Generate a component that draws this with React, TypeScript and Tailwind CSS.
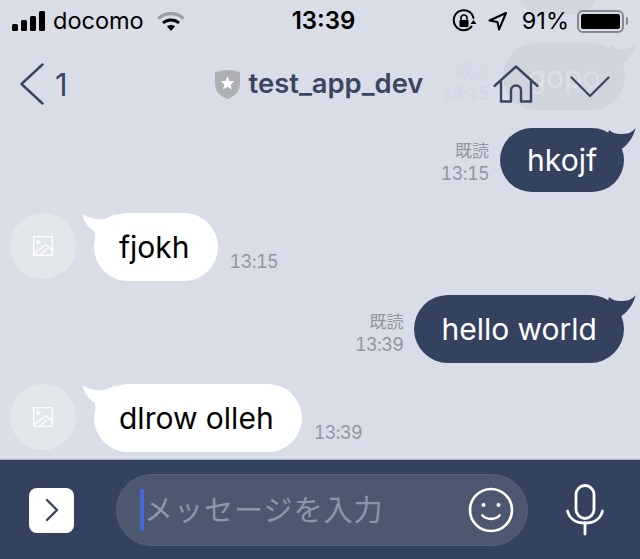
const font = { sans: "font-['Inter','Noto_Sans_CJK_JP',sans-serif]" }

function SignalBars() {
  return (
    <svg viewBox="0 0 34 20" className="h-5 w-[34px]" fill="#000">
      <rect x="0" y="13" width="6" height="7" rx="1.5" />
      <rect x="9" y="9" width="6" height="11" rx="1.5" />
      <rect x="18" y="5" width="6" height="15" rx="1.5" />
      <rect x="27" y="0" width="6" height="20" rx="1.5" />
    </svg>
  )
}

function Wifi() {
  return (
    <svg viewBox="0 0 28 20" className="h-5 w-7" fill="none" strokeLinecap="butt">
      <path d="M1.5 7.5C8.5 1 19.5 1 26.5 7.5" stroke="#9a9da3" strokeWidth="3.2" />
      <path d="M6 12c4.5-4 11.5-4 16 0" stroke="#000" strokeWidth="3" />
      <path d="M10 15.5c2.4-2 5.6-2 8 0L14 20z" fill="#000" />
    </svg>
  )
}

function RotationLock() {
  return (
    <svg viewBox="0 0 24 24" className="h-6 w-6" fill="none">
      <path d="M19.5 17.5A10 10 0 1 1 21.5 9" stroke="#000" strokeWidth="2" strokeLinecap="round" />
      <path d="M18.5 11h6l-3 4z" fill="#000" transform="rotate(180 21.5 13)" />
      <path d="M9 11V9a3 3 0 0 1 6 0v2" stroke="#000" strokeWidth="1.6" />
      <rect x="7.5" y="11" width="9" height="7" rx="1.2" fill="#000" />
    </svg>
  )
}

function LocationArrow() {
  return (
    <svg viewBox="0 0 20 20" className="h-5 w-5" fill="none" stroke="#000" strokeWidth="2" strokeLinejoin="round">
      <path d="M18 2 1.5 9.5l8 1.5 1.5 7.500z" />
    </svg>
  )
}

function Battery() {
  return (
    <div className="flex items-center">
      <div className="flex h-[23px] w-[47px] rounded-[6px] border-2 border-[#85888e] p-[2px]">
        <div className="h-full w-full rounded-[2px] bg-black" />
      </div>
      <div className="ml-[2px] h-2 w-[2px] rounded-r bg-[#85888e]" />
    </div>
  )
}

function Shield() {
  return (
    <svg viewBox="0 0 28 32" className="h-[31px] w-[27px]">
      <path d="M1 3.500C6 1.800 9.500 1 14 1s8 .8 13 2.500V15c0 8-5.500 13.500-13 16C6.500 28.500 1 23 1 15z" fill="#aeb0b4" />
      <path d="m14 7.500 2 4.800 5.200.4-4 3.400 1.300 5-4.500-2.700-4.500 2.700 1.300-5-4-3.400 5.200-.4z" fill="#fff" />
    </svg>
  )
}

function Home() {
  return (
    <svg viewBox="0 0 46 38" className="h-[38px] w-[46px]" fill="none" stroke="#3a4560" strokeWidth="2.400" strokeLinecap="round" strokeLinejoin="round">
      <path d="M1.500 21 23 1.500 44.500 21" />
      <path d="M8 16v20.500h10V25.500a5 5 0 0 1 10 0v11h10V16" />
    </svg>
  )
}

function Tail({ side, color }: { side: 'left' | 'right'; color: string }) {
  if (side === 'left') {
    return (
      <svg viewBox="0 0 36 30" className="absolute left-[-12px] top-0 h-[30px] w-9" fill={color}>
        <path d="M0 1C6 5 14 7 22 6 26 5 30 3 34 0L14 30 13 19C6 15 2 8 0 1z" />
      </svg>
    )
  }
  return (
    <svg viewBox="0 0 36 30" className="absolute right-[-12px] top-0 h-[30px] w-9" fill={color}>
      <path d="M35.500 0C32 5 27 6 20 6 16 6 13 5 9 2L2 30 23 20C29 15 34 8 35.500 0z" />
    </svg>
  )
}

function Avatar() {
  return (
    <div className="flex h-[66px] w-[66px] items-center justify-center rounded-full bg-[#e3e6eb]">
      <svg viewBox="0 0 20 20" className="h-5 w-5" fill="none" stroke="#fff" strokeWidth="1.300">
        <rect x="0.700" y="0.700" width="18.600" height="18.600" />
        <path d="M1 18 12.500 8.500 19 14M7 19l7-6" />
        <path d="M4 3.500v5l4-2.500z" fill="#fff" stroke="none" />
      </svg>
    </div>
  )
}

function Incoming({ text, time }: { text: string; time: string }) {
  return (
    <div className="flex items-end pl-[10px]">
      <div className="self-start">
        <Avatar />
      </div>
      <div className="relative ml-[18px] flex h-[68px] items-center rounded-[34px] bg-white pl-[25px] pr-[28px] text-[30px] leading-none text-black">
        <Tail side="left" color="#fff" />
        <span className="relative">{text}</span>
      </div>
      <span className="mb-[10px] ml-3 text-[18px] leading-none tabular-nums tracking-[-0.6px] text-[#92969f]">{time}</span>
    </div>
  )
}

function Outgoing({ text, time, height }: { text: string; time: string; height: string }) {
  return (
    <div className="flex items-end justify-end pr-4">
      <div className="mr-[11px] flex flex-col items-end pb-[6px] text-[#92969f]">
        <span className="text-[17px] leading-[22px]">既読</span>
        <span className="text-[18px] leading-[24px] tabular-nums tracking-[-0.6px]">{time}</span>
      </div>
      <div className={`relative flex items-center rounded-[34px] bg-[#34425f] px-[27px] text-[30px] leading-none text-white ${height}`}>
        <Tail side="right" color="#34425f" />
        <span className="relative">{text}</span>
      </div>
    </div>
  )
}

export default function App() {
  return (
    <div className={`relative flex h-[559px] w-[640px] flex-col overflow-hidden bg-[#d8dde8] ${font.sans}`}>
      {/* messages that have scrolled up behind the translucent header */}
      <div className="absolute right-[41px] top-[-42px] h-[57px] w-[82px] rounded-[28px] bg-[#d2d6df]" />
      <div className="absolute right-[15px] top-[43px] flex h-[67px] w-[122px] items-center justify-center rounded-[34px] bg-[#d0d4dd] text-[30px] leading-none text-[#dcdfe8]">
        <Tail side="right" color="#d0d4dd" />
        <span className="relative">gopo</span>
      </div>
      <div className="absolute right-[150px] top-[60px] flex flex-col items-end text-[#d3d7e2]">
        <span className="text-[17px] leading-[22px]">既読</span>
        <span className="text-[18px] leading-[24px] tabular-nums tracking-[-0.6px]">13:15</span>
      </div>

      <div className="relative flex h-[42px] items-center pl-3 pr-3 text-[23.500px] leading-none text-black">
        <SignalBars />
        <span className="ml-[7px]">docomo</span>
        <div className="ml-[13px]">
          <Wifi />
        </div>
        <span className="ml-[107px] text-[24px] font-semibold">13:39</span>
        <div className="ml-auto flex items-center">
          <RotationLock />
          <div className="ml-3">
            <LocationArrow />
          </div>
          <span className="ml-[14px]">91%</span>
          <div className="ml-2">
            <Battery />
          </div>
        </div>
      </div>

      <div className="relative flex h-[84px] items-center text-[#3a4560]">
        <svg viewBox="0 0 26 42" className="ml-[19px] h-[42px] w-[26px]" fill="none" stroke="#3a4560" strokeWidth="2.400" strokeLinecap="round" strokeLinejoin="round">
          <path d="M23.500 1.500 2.500 21l21 19.500" />
        </svg>
        <span className="ml-[10px] text-[31px] leading-none">1</span>
        <div className="ml-[146px] flex items-center gap-2">
          <Shield />
          <span className="text-[27.400px] font-semibold leading-none">test_app_dev</span>
        </div>
        <div className="ml-[70px]">
          <Home />
        </div>
        <svg viewBox="0 0 40 22" className="ml-[31px] mt-[6px] h-[22px] w-10" fill="none" stroke="#3a4560" strokeWidth="2.200" strokeLinecap="round" strokeLinejoin="round">
          <path d="M1.500 1.500 20 20 38.500 1.500" />
        </svg>
      </div>

      <div className="relative flex flex-1 flex-col pt-[2px]">
        <Outgoing text="hkojf" time="13:15" height="h-[64px]" />
        <div className="mt-[21px]">
          <Incoming text="fjokh" time="13:15" />
        </div>
        <div className="mt-[14px]">
          <Outgoing text="hello world" time="13:39" height="h-[68px]" />
        </div>
        <div className="mt-[21px]">
          <Incoming text="dlrow olleh" time="13:39" />
        </div>
      </div>

      <div className="relative flex h-[100px] items-center border-t border-[#aab0c0] bg-[#34425f] pt-[1px]">
        <div className="ml-[29px] flex h-[45px] w-[45px] items-center justify-center rounded-[8px] bg-white">
          <svg viewBox="0 0 14 24" className="h-6 w-[14px]" fill="none" stroke="#3a4560" strokeWidth="2.400" strokeLinecap="round" strokeLinejoin="round">
            <path d="M2 2l10 10L2 22" />
          </svg>
        </div>
        <div className="ml-[42px] flex h-[72px] w-[412px] items-center rounded-[36px] border border-[#56627c] bg-[#4c5870] pl-[23px] pr-[13px]">
          <div className="h-[42px] w-1 bg-[#4a65d8]" />
          <span className="text-[29px] leading-none tracking-[1px] text-[#8d96a8]">メッセージを入力</span>
          <svg viewBox="0 0 46 46" className="ml-auto h-[46px] w-[46px]" fill="none" stroke="#fff" strokeWidth="2.600" strokeLinecap="round">
            <circle cx="23" cy="23" r="21" />
            <circle cx="15.500" cy="18" r="2" fill="#fff" stroke="none" />
            <circle cx="30.500" cy="18" r="2" fill="#fff" stroke="none" />
            <path d="M14.500 28.500c4 4.500 13 4.500 17 0" />
          </svg>
        </div>
        <svg viewBox="0 0 38 52" className="ml-[38px] h-[52px] w-[38px]" fill="none" stroke="#fff" strokeWidth="2.800" strokeLinecap="round">
          <rect x="10" y="1.500" width="18" height="33" rx="9" />
          <path d="M1.500 27c2 8 9 12 17.500 12s15.500-4 17.500-12" />
          <path d="M19 39v11" />
        </svg>
      </div>
    </div>
  )
}
